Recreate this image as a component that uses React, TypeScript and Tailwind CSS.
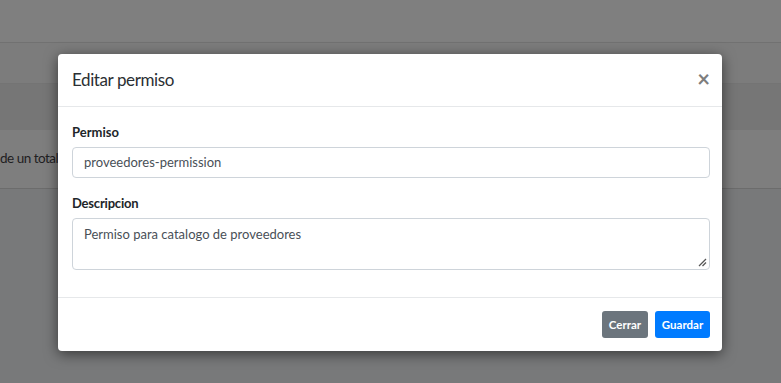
import React from "react";

export default function App() {
  const font = { fontFamily: "Lato, 'Noto Sans', sans-serif" };
  return (
    <div className="relative w-[781px] h-[383px] overflow-hidden bg-[#78797a]" style={font}>
      {/* background page (dimmed) */}
      <div className="flex flex-col">
        <div className="h-[43px] bg-[#7f7f7f] border-b border-[#717171]" />
        <div className="h-[41px] bg-[#7c7c7c] border-b border-[#747474]" />
        <div className="h-[46px] bg-[#767676]" />
        <div className="h-[59px] bg-[#7e7e7e] border-b border-[#6c6c6c] flex items-center">
          <span className="text-[13.5px] tracking-[-0.5px] text-[#1f2022] pb-[1px] whitespace-nowrap">de un total</span>
        </div>
      </div>

      {/* modal */}
      <div className="absolute left-[58px] top-[54px] w-[664px] bg-white rounded-[4px] shadow-[0_3px_14px_rgba(0,0,0,0.55)]">
        <div className="h-[53px] border-b border-[#e6e8ea] flex items-center justify-between pl-[14px] pr-[12px]">
          <h5 className="text-[17px] tracking-[-0.4px] text-[#2b2f33] leading-none pb-[1px]">Editar permiso</h5>
          <span className="text-[22px] font-bold text-[#7d7d7d] leading-none pb-[2px]">×</span>
        </div>
        <div className="pl-[14px] pr-[12px] pt-[14px] pb-[27px]">
          <label className="block text-[13px] font-bold text-[#212529] leading-[22px] mb-[4px]">Permiso</label>
          <div className="h-[31px] border border-[#ced4da] rounded-[4px] flex items-center px-[11px] text-[13px] text-[#495057]">
            proveedores-permission
          </div>
          <label className="block text-[13px] tracking-[-0.2px] font-bold text-[#212529] leading-[22px] mt-[14px] mb-[4px]">Descripcion</label>
          <div className="relative h-[52px] border border-[#ced4da] rounded-[4px] px-[11px] pt-[6px] text-[13px] text-[#495057]">
            Permiso para catalogo de proveedores
            <svg className="absolute right-[2px] bottom-[2px]" width="10" height="10" viewBox="0 0 10 10">
              <line x1="2" y1="9" x2="9" y2="2" stroke="#555" strokeWidth="1.2" />
              <line x1="5.5" y1="9" x2="9" y2="5.5" stroke="#555" strokeWidth="1.2" />
            </svg>
          </div>
        </div>
        <div className="h-[54px] border-t border-[#e6e8ea] flex items-center justify-end gap-[7px] pr-[12px]">
          <button className="h-[27px] w-[46px] rounded-[3px] bg-[#6c757d] text-white text-[11.5px] font-bold">Cerrar</button>
          <button className="h-[27px] w-[55px] rounded-[3px] bg-[#007bff] text-white text-[11.5px] font-bold">Guardar</button>
        </div>
      </div>
    </div>
  );
}
